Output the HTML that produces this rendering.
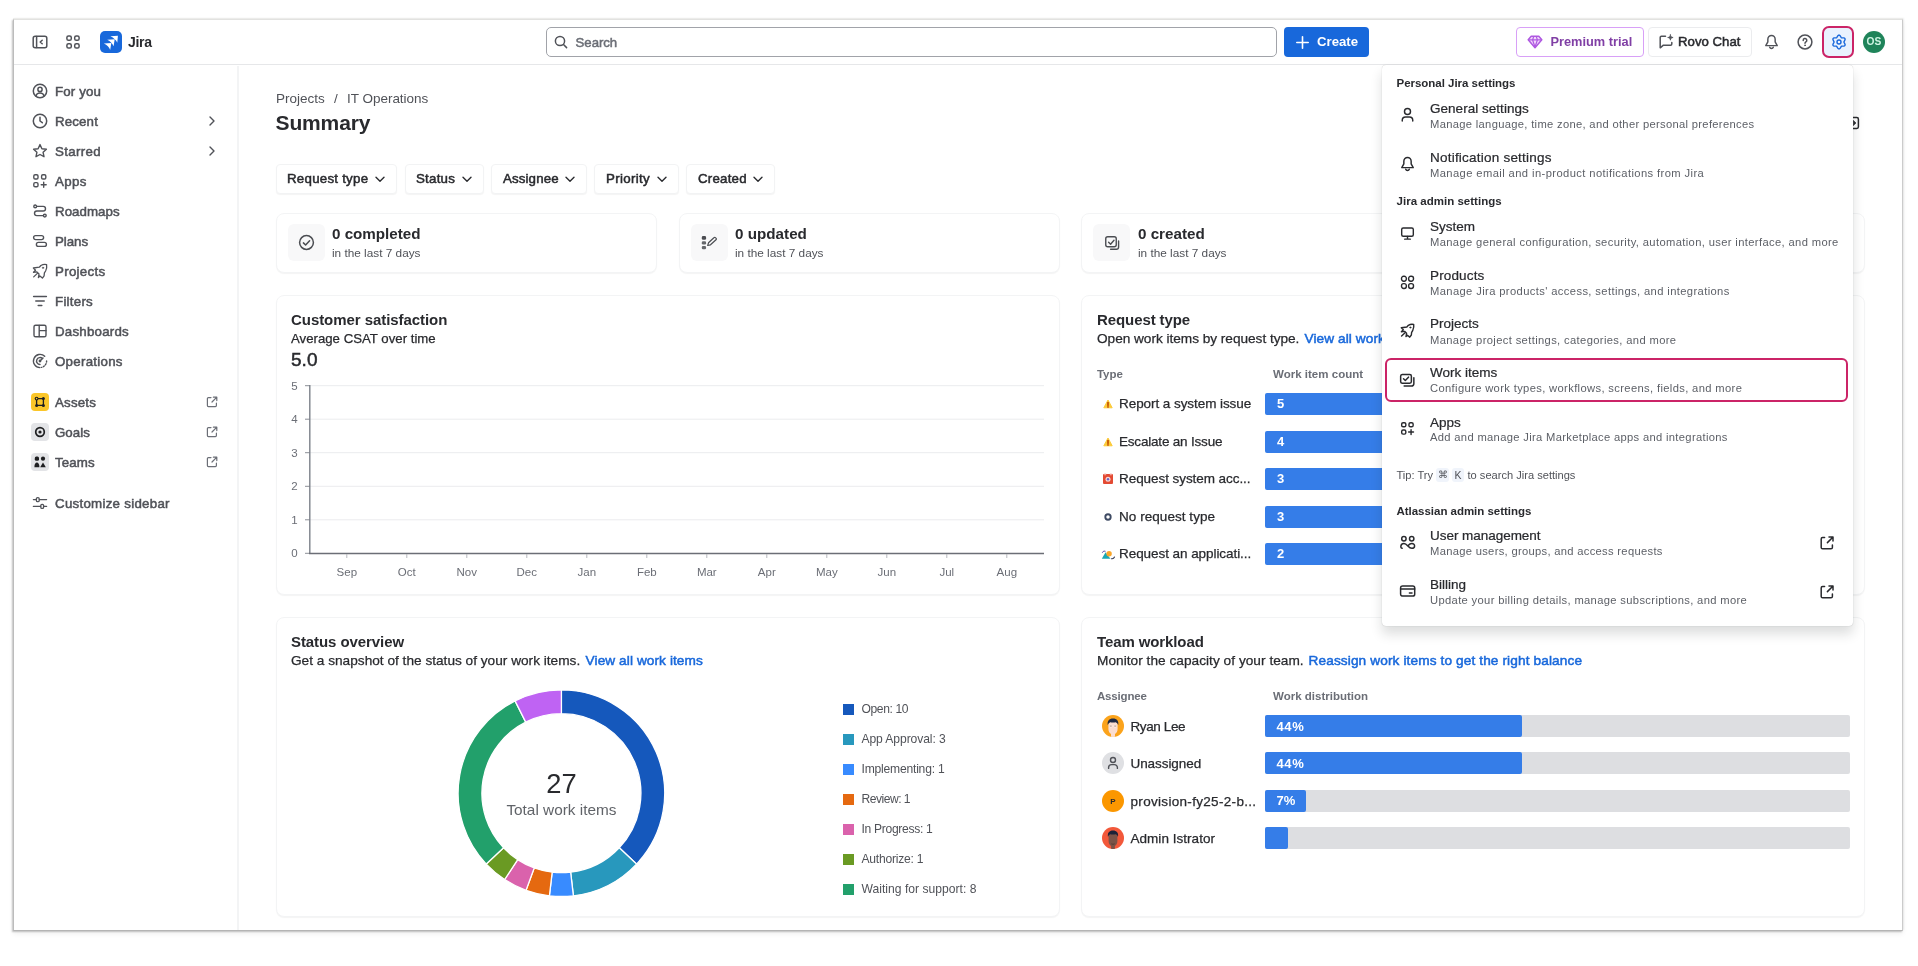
<!DOCTYPE html>
<html lang="en">
<head>
<meta charset="utf-8">
<title>Summary - IT Operations - Jira</title>
<style>
*{box-sizing:border-box;margin:0;padding:0}
html,body{width:1918px;height:966px;overflow:hidden;background:#fff}
body{font-family:"Liberation Sans",Arial,sans-serif;font-size:14px;color:#292A2E;position:relative}
.abs{position:absolute}
#frame{position:absolute;left:13px;top:19px;width:1890px;height:912px;background:#fff;border:1px solid #c9c9c9;border-left-color:#bcbcbc;border-bottom-color:#b4b4b4;border-right-color:#cbcbcb;border-top-color:#e2e2e0;box-shadow:0 -1px 0 #ececea,-1px 1px 1.500px rgba(0,0,0,.22),1px -1px 1.500px rgba(0,0,0,.07),0 3px 5px rgba(0,0,0,.06);overflow:hidden}
/* everything inside #app is positioned in page coordinates */
#app{position:absolute;left:-14px;top:-20px;width:1918px;height:966px;will-change:transform}
.t{position:absolute;white-space:nowrap;line-height:16px}
.m{-webkit-text-stroke:.5px currentColor}
.m2{-webkit-text-stroke:.25px currentColor}
.m3{-webkit-text-stroke:.22px currentColor}
.b{font-weight:700}
svg{position:absolute;overflow:visible}
.ic{fill:none;stroke:currentColor;stroke-width:1.5;stroke-linecap:round;stroke-linejoin:round}
.hline{position:absolute;height:1px;background:#E6E7E9}
.vline{position:absolute;width:1px;background:#EFF0F1}
/* sidebar */
.nav{color:#505258;font-size:13.300px}
.nav .t{left:55px}
/* cards */
.card{position:absolute;background:#fff;border:1px solid #F3F4F5;border-radius:8px;box-shadow:0 1px 1px rgba(30,31,33,.05)}
.fbtn{position:absolute;top:164px;height:30px;border:1px solid #F2F3F4;border-radius:4px;background:#fff;box-shadow:0 1px 1px rgba(30,31,33,.05)}
.sub{color:#505258}
.link{color:#1868DB}
.bar{position:absolute;height:22px;background:#357DE8;border-radius:2px}
.barbg{position:absolute;height:22px;background:#DDDEE1;border-radius:2px}
.barnum{position:absolute;color:#fff;font-weight:700;font-size:13px;line-height:22px}
</style>
</head>
<body>
<div id="frame"><div id="app">

<!-- ================= HEADER ================= -->
<div id="header">
  <div class="hline" style="left:14px;top:64px;width:1890px"></div>
  <!-- sidebar toggle -->
  <svg class="ic" style="left:32px;top:34px;color:#505258" width="16" height="16" viewBox="0 0 16 16"><rect x="1.2" y="2.2" width="13.6" height="11.6" rx="2"/><path d="M4.6 2.4v11.2M10.2 6.2L8.2 8l2 1.8"/></svg>
  <!-- app switcher -->
  <svg class="ic" style="left:65px;top:34px;color:#505258" width="16" height="16" viewBox="0 0 16 16"><rect x="1.9" y="1.9" width="4.4" height="4.4" rx="1.6"/><rect x="9.7" y="1.9" width="4.4" height="4.4" rx="1.6"/><rect x="1.9" y="9.7" width="4.4" height="4.4" rx="1.6"/><rect x="9.7" y="9.7" width="4.4" height="4.4" rx="1.6"/></svg>
  <!-- jira logo -->
  <div class="abs" style="left:100px;top:31px;width:22px;height:22px;border-radius:5px;background:#1868DB"></div>
  <svg style="left:100px;top:31px" width="22" height="22" viewBox="0 0 22 22"><g fill="#fff"><path d="M10.400 5.300L17.900 4.700 17.300 11.800Q15.600 7.800 10.400 5.300Z"/><path d="M7.200 8.700L14.700 8.200 13.600 15.300Q12.200 11.200 7.200 8.700Z"/><path d="M3.900 12.500L11.300 12 10.200 18.900Q8.700 14.800 3.900 12.500Z"/></g></svg>
  <span class="t b" style="left:128px;top:34px;font-size:14px;color:#292A2E;letter-spacing:-0.280px">Jira</span>
  <!-- search -->
  <div class="abs" style="left:546px;top:27px;width:731px;height:30px;border:1px solid #A1A3A9;border-radius:5px;background:#fff"></div>
  <svg class="ic" style="left:554px;top:35px;color:#505258" width="14" height="14" viewBox="0 0 14 14"><circle cx="6" cy="6" r="4.6"/><path d="M9.5 9.5L12.6 12.6"/></svg>
  <span class="t m" style="left:575.600px;top:34.500px;font-size:13.200px;color:#6B6E76;letter-spacing:-0.049px">Search</span>
  <!-- create -->
  <div class="abs" style="left:1284px;top:27px;width:85px;height:30px;border-radius:4px;background:#1868DB"></div>
  <svg class="ic" style="left:1296px;top:36px;color:#fff;stroke-width:1.6" width="13" height="13" viewBox="0 0 13 13"><path d="M6.5 .8v11.4M.8 6.500h11.400"/></svg>
  <span class="t b" style="left:1317px;top:34px;font-size:13.200px;color:#fff;letter-spacing:-0.010px">Create</span>
  <!-- premium trial -->
  <div class="abs" style="left:1516px;top:27px;width:128px;height:30px;border:1px solid #D8A0F7;border-radius:4px;background:#fff"></div>
  <svg style="left:1527px;top:35px" width="16" height="14" viewBox="0 0 16 14"><path d="M4.2 1.2h7.600l3 3.600L8 12.800 1.200 4.800z" fill="#F3D9FC" stroke="#AF59E1" stroke-width="1.500" stroke-linejoin="round"/><path d="M1.500 4.900h13M5.600 5L8 12 10.400 5M5.600 4.800l1.200-3.400M10.400 4.800L9.200 1.400" fill="none" stroke="#AF59E1" stroke-width="1.200" stroke-linejoin="round"/></svg>
  <span class="t b" style="left:1550.500px;top:34px;font-size:12.800px;color:#803FA5;letter-spacing:-0.007px">Premium trial</span>
  <!-- rovo chat -->
  <div class="abs" style="left:1648px;top:27px;width:104px;height:30px;border:1px solid #EBECEE;border-radius:4px;background:#fff"></div>
  <svg class="ic" style="left:1658px;top:34px;color:#505258" width="17" height="17" viewBox="0 0 17 17"><path d="M7.500 2.200H3.400a1.200 1.200 0 0 0-1.200 1.200v10.400l3.200-2.600h7.200a1.200 1.200 0 0 0 1.200-1.200V8.500"/><path d="M12.400 .8c.2 1.800.9 2.500 2.700 2.700-1.800.2-2.500.9-2.700 2.700-.2-1.800-.9-2.500-2.700-2.700 1.800-.2 2.500-.9 2.700-2.700z" fill="currentColor" stroke-width=".8"/></svg>
  <span class="t m" style="left:1678px;top:34px;font-size:13.200px;color:#292A2E;letter-spacing:0.021px">Rovo Chat</span>
  <!-- bell -->
  <svg class="ic" style="left:1763.600px;top:34.300px;color:#505258;stroke-width:1.550" width="15" height="15" viewBox="0 0 16 16"><path d="M8 1.600a3.900 3.900 0 0 0-3.900 3.900v3l-2.200 3.900h12.200l-2.200-3.900v-3A3.900 3.900 0 0 0 8 1.600z"/><path d="M6.100 14.100a2 2 0 0 0 3.800 0"/></svg>
  <!-- help -->
  <svg class="ic" style="left:1796.500px;top:34.300px;color:#505258" width="16" height="16" viewBox="0 0 16 16"><circle cx="8" cy="8" r="6.900"/><path d="M6.200 6.400a1.800 1.800 0 1 1 2.700 1.500c-.6.400-.9.700-.9 1.400"/><circle cx="8" cy="11.300" r=".5" fill="currentColor" stroke-width=".8"/></svg>
  <!-- settings (selected + highlighted) -->
  <div class="abs" style="left:1822px;top:26px;width:32px;height:32px;border:2px solid #CB2467;border-radius:7px;background:#E9F2FE"></div>
  <svg style="left:1830.600px;top:34.200px" width="16" height="16" viewBox="0 0 16 16"><g fill="none" stroke="#1868DB" stroke-width="1.4" stroke-linejoin="round"><path d="M8.00 1.15 L8.59 1.30 L9.11 1.72 L9.53 2.30 L9.86 2.90 L10.15 3.40 L10.47 3.71 L10.91 3.84 L11.49 3.84 L12.17 3.83 L12.88 3.90 L13.51 4.14 L13.93 4.57 L14.09 5.16 L13.99 5.82 L13.70 6.47 L13.34 7.06 L13.06 7.56 L12.95 8.00 L13.06 8.44 L13.34 8.94 L13.70 9.53 L13.99 10.18 L14.09 10.84 L13.93 11.42 L13.51 11.86 L12.88 12.10 L12.17 12.17 L11.49 12.16 L10.91 12.16 L10.48 12.29 L10.15 12.60 L9.86 13.10 L9.53 13.70 L9.11 14.28 L8.59 14.70 L8.00 14.85 L7.41 14.70 L6.89 14.28 L6.47 13.70 L6.14 13.10 L5.85 12.60 L5.52 12.29 L5.09 12.16 L4.51 12.16 L3.83 12.17 L3.12 12.10 L2.49 11.86 L2.07 11.43 L1.91 10.84 L2.01 10.18 L2.30 9.53 L2.66 8.94 L2.94 8.44 L3.05 8.00 L2.94 7.56 L2.66 7.06 L2.30 6.47 L2.01 5.82 L1.91 5.16 L2.07 4.58 L2.49 4.14 L3.12 3.90 L3.83 3.83 L4.51 3.84 L5.09 3.84 L5.53 3.71 L5.85 3.40 L6.14 2.90 L6.47 2.30 L6.89 1.72 L7.41 1.30Z"/><circle cx="8" cy="8" r="2"/></g></svg>
  <!-- avatar -->
  <div class="abs" style="left:1863px;top:31px;width:22px;height:22px;border-radius:50%;background:#1F845A"></div>
  <span class="t b" style="left:1866.500px;top:35px;font-size:10.200px;line-height:14px;color:#CFF5E4">OS</span>
</div>

<!-- ================= SIDEBAR ================= -->
<div id="sidebar" class="nav">
  <div class="vline" style="left:237px;top:66px;width:2px;height:866px;background:#F3F4F5"></div>

  <!-- For you -->
  <svg class="ic" style="left:32px;top:83px" width="16" height="16" viewBox="0 0 16 16"><circle cx="8" cy="8" r="6.7"/><circle cx="8" cy="6.4" r="2.1"/><path d="M3.900 13.100c.5-2 2.100-3 4.100-3s3.600 1 4.100 3"/></svg>
  <span class="t m" style="top:83.5px;letter-spacing:0.129px">For you</span>

  <!-- Recent -->
  <svg class="ic" style="left:32px;top:113px" width="16" height="16" viewBox="0 0 16 16"><circle cx="8" cy="8" r="6.700"/><path d="M8 4.200V8l2.300 1.700"/></svg>
  <span class="t m" style="top:113.5px;letter-spacing:0.143px">Recent</span>
  <svg class="ic" style="left:208px;top:116px;stroke-width:1.400" width="8" height="10" viewBox="0 0 8 10"><path d="M2 1l4 4-4 4"/></svg>

  <!-- Starred -->
  <svg class="ic" style="left:32px;top:143px;stroke-width:1.400" width="16" height="16" viewBox="0 0 16 16"><path d="M8 1.600l1.900 4.100 4.500.5-3.300 3.100.9 4.400L8 11.500l-4 2.200.9-4.400L1.600 6.200l4.500-.5z"/></svg>
  <span class="t m" style="top:143.5px;letter-spacing:0.342px">Starred</span>
  <svg class="ic" style="left:208px;top:146px;stroke-width:1.400" width="8" height="10" viewBox="0 0 8 10"><path d="M2 1l4 4-4 4"/></svg>

  <!-- Apps -->
  <svg class="ic" style="left:32px;top:173px;stroke-width:1.400" width="16" height="16" viewBox="0 0 16 16"><rect x="1.800" y="1.800" width="4.200" height="4.200" rx="1.300"/><rect x="9.600" y="1.800" width="4.200" height="4.200" rx="1.300"/><rect x="1.800" y="9.600" width="4.200" height="4.200" rx="1.300"/><path d="M11.700 9.200v5M9.200 11.700h5"/></svg>
  <span class="t m" style="top:173.5px;letter-spacing:0.322px">Apps</span>

  <!-- Roadmaps -->
  <svg class="ic" style="left:32px;top:203px;stroke-width:1.400" width="16" height="16" viewBox="0 0 16 16"><circle cx="3.200" cy="3.400" r="1.400"/><circle cx="12.800" cy="12.600" r="1.400"/><path d="M4.800 3.400h6.400a2.300 2.300 0 0 1 0 4.600H4.800a2.300 2.300 0 0 0 0 4.600h6.400"/></svg>
  <span class="t m" style="top:203.5px;letter-spacing:0.036px">Roadmaps</span>

  <!-- Plans -->
  <svg class="ic" style="left:32px;top:233px;stroke-width:1.400" width="16" height="16" viewBox="0 0 16 16"><rect x="1.600" y="2.600" width="10" height="4" rx="2"/><rect x="4.400" y="9.400" width="10" height="4" rx="2"/></svg>
  <span class="t m" style="top:233.5px;letter-spacing:-0.053px">Plans</span>

  <!-- Projects (rocket) -->
  <svg class="ic" style="left:32px;top:263px;stroke-width:1.300" width="16" height="16" viewBox="0 0 16 16"><path d="M7.300 4.200L1.400 5l2.100 2.300-2 2 3.400-.4 2.100 2.100-.600 3.500 1.500-1.500 2.500 2.100 1.700-2.300.3-2.900 1.200-1.900Q15.200 4.600 14.600 1.600 11.600.900 8.900 2.500z"/><path d="M1.700 13.900L5.400 10.400"/><circle cx="11" cy="4.800" r=".7" fill="currentColor" stroke-width=".6"/></svg>
  <span class="t m" style="top:263.5px;letter-spacing:0.294px">Projects</span>

  <!-- Filters -->
  <svg class="ic" style="left:32px;top:293px;stroke-width:1.500" width="16" height="16" viewBox="0 0 16 16"><path d="M1.600 3.400h12.800M3.800 8h8.400M6.200 12.600h3.600"/></svg>
  <span class="t m" style="top:293.5px;letter-spacing:0.257px">Filters</span>

  <!-- Dashboards -->
  <svg class="ic" style="left:32px;top:323px;stroke-width:1.400" width="16" height="16" viewBox="0 0 16 16"><rect x="2" y="2.200" width="12" height="11.600" rx="1.600"/><path d="M7.200 2.400v11.200M7.400 7.600H14"/></svg>
  <span class="t m" style="top:323.5px;letter-spacing:0.230px">Dashboards</span>

  <!-- Operations (radar) -->
  <svg class="ic" style="left:32px;top:353px;stroke-width:1.400" width="16" height="16" viewBox="0 0 16 16"><path d="M12.700 3.300A6.600 6.600 0 1 0 8 14.600"/><path d="M10.500 5.500A3.500 3.500 0 1 0 8 11.500"/><circle cx="8" cy="8" r=".7" fill="currentColor"/><path d="M14.600 8a6.600 6.600 0 0 1-5 6.400" stroke-dasharray="1.200 1.600"/><path d="M8 8l3-3"/></svg>
  <span class="t m" style="top:353.5px;letter-spacing:0.275px">Operations</span>

  <!-- Assets -->
  <div class="abs" style="left:31px;top:393px;width:18px;height:18px;border-radius:4px;background:#FBC629"></div>
  <svg style="left:32px;top:394px" width="16" height="16" viewBox="0 0 16 16"><g fill="none" stroke="#1E1F21" stroke-width="1.300"><path d="M4.600 4.600h6.800v6.800H4.600z"/></g><g fill="#1E1F21"><circle cx="4.600" cy="4.600" r="1.900"/><circle cx="11.400" cy="4.600" r="1.500"/><circle cx="4.600" cy="11.400" r="1.500"/><circle cx="11.400" cy="11.400" r="1.500"/></g><circle cx="4.600" cy="4.600" r=".8" fill="#FBC629"/></svg>
  <span class="t m" style="top:394.5px;letter-spacing:0.182px">Assets</span>
  <svg class="ic" style="left:206px;top:396px;stroke-width:1.200;color:#6B6E76" width="12" height="12" viewBox="0 0 12 12"><path d="M5 1.600H2.400a1 1 0 0 0-1 1v7a1 1 0 0 0 1 1h7a1 1 0 0 0 1-1V7.200M7.400 1.200h3.400v3.400M10.600 1.400L6 6"/></svg>

  <!-- Goals -->
  <div class="abs" style="left:31px;top:423px;width:18px;height:18px;border-radius:4px;background:#E3E4E7"></div>
  <svg style="left:32px;top:424px" width="16" height="16" viewBox="0 0 16 16"><circle cx="8" cy="8" r="4.300" fill="none" stroke="#1E1F21" stroke-width="1.700"/><circle cx="8" cy="8" r="1.600" fill="#1E1F21"/></svg>
  <span class="t m" style="top:424.5px;letter-spacing:0.010px">Goals</span>
  <svg class="ic" style="left:206px;top:426px;stroke-width:1.200;color:#6B6E76" width="12" height="12" viewBox="0 0 12 12"><path d="M5 1.600H2.400a1 1 0 0 0-1 1v7a1 1 0 0 0 1 1h7a1 1 0 0 0 1-1V7.200M7.400 1.200h3.400v3.400M10.600 1.400L6 6"/></svg>

  <!-- Teams -->
  <div class="abs" style="left:31px;top:453px;width:18px;height:18px;border-radius:4px;background:#E3E4E7"></div>
  <svg style="left:32px;top:454px" width="16" height="16" viewBox="0 0 16 16"><g fill="#1E1F21"><rect x="2.800" y="2.600" width="4.200" height="4.200" rx="1.500"/><circle cx="11" cy="4.700" r="2.100"/><path d="M2.400 13.200c0-3 1.100-4.600 2.500-4.600s2.500 1.600 2.500 4.600z"/><path d="M8.200 13.200l2.800-4.800 2.800 4.800z"/></g></svg>
  <span class="t m" style="top:454.5px;letter-spacing:0.126px">Teams</span>
  <svg class="ic" style="left:206px;top:456px;stroke-width:1.200;color:#6B6E76" width="12" height="12" viewBox="0 0 12 12"><path d="M5 1.600H2.400a1 1 0 0 0-1 1v7a1 1 0 0 0 1 1h7a1 1 0 0 0 1-1V7.200M7.400 1.200h3.400v3.400M10.600 1.400L6 6"/></svg>

  <!-- Customize sidebar -->
  <svg class="ic" style="left:32px;top:495px;stroke-width:1.300" width="16" height="16" viewBox="0 0 16 16"><path d="M1.400 4.600h2.800M7.400 4.600h7.200M1.400 11.400h7.200M11.800 11.400h2.800"/><rect x="4.400" y="2.600" width="2.800" height="4" rx="1.200"/><rect x="8.800" y="9.400" width="2.800" height="4" rx="1.200"/></svg>
  <span class="t m" style="top:495.5px;letter-spacing:0.275px">Customize sidebar</span>
</div>

<!-- ================= MAIN ================= -->
<div id="main">
  <!-- breadcrumbs + title -->
  <span class="t" style="left:276px;top:91px;font-size:13.500px;color:#505258;letter-spacing:0.002px">Projects</span>
  <span class="t" style="left:334px;top:91px;font-size:13.500px;color:#505258">/</span>
  <span class="t" style="left:347px;top:91px;font-size:13.500px;color:#505258;letter-spacing:-0.019px">IT Operations</span>
  <span class="t b" style="left:275.500px;top:109px;font-size:21px;line-height:28px;color:#292A2E;letter-spacing:-0.131px">Summary</span>
  <!-- icon peeking right of the dropdown -->
  <svg class="ic" style="left:1846px;top:116px;color:#292A2E;stroke-width:1.500" width="14" height="14" viewBox="0 0 14 14"><rect x="1" y="1.600" width="11.400" height="10.800" rx="1.600"/><path d="M7.400 4.800L9.800 7 7.400 9.200z" fill="currentColor" stroke-width="1"/></svg>

  <!-- filter buttons -->
  <div class="fbtn" style="left:276px;width:121px"></div>
  <span class="t m" style="left:287px;top:171.300px;font-size:13.300px;color:#292A2E;letter-spacing:0.245px">Request type</span>
  <svg class="ic" style="left:375px;top:176px;stroke-width:1.400;color:#292A2E" width="10" height="7" viewBox="0 0 10 7"><path d="M1 1.200l4 4 4-4"/></svg>
  <div class="fbtn" style="left:405px;width:79px"></div>
  <span class="t m" style="left:416px;top:171.300px;font-size:13.300px;color:#292A2E;letter-spacing:0.233px">Status</span>
  <svg class="ic" style="left:462px;top:176px;stroke-width:1.400;color:#292A2E" width="10" height="7" viewBox="0 0 10 7"><path d="M1 1.200l4 4 4-4"/></svg>
  <div class="fbtn" style="left:491px;width:96px"></div>
  <span class="t m" style="left:503px;top:171.300px;font-size:13.300px;color:#292A2E;letter-spacing:0.125px">Assignee</span>
  <svg class="ic" style="left:565px;top:176px;stroke-width:1.400;color:#292A2E" width="10" height="7" viewBox="0 0 10 7"><path d="M1 1.200l4 4 4-4"/></svg>
  <div class="fbtn" style="left:594px;width:85px"></div>
  <span class="t m" style="left:606px;top:171.300px;font-size:13.300px;color:#292A2E;letter-spacing:0.341px">Priority</span>
  <svg class="ic" style="left:657px;top:176px;stroke-width:1.400;color:#292A2E" width="10" height="7" viewBox="0 0 10 7"><path d="M1 1.200l4 4 4-4"/></svg>
  <div class="fbtn" style="left:686px;width:89px"></div>
  <span class="t m" style="left:698px;top:171.300px;font-size:13.300px;color:#292A2E;letter-spacing:0.212px">Created</span>
  <svg class="ic" style="left:753px;top:176px;stroke-width:1.400;color:#292A2E" width="10" height="7" viewBox="0 0 10 7"><path d="M1 1.200l4 4 4-4"/></svg>

  <!-- stat cards -->
  <div class="card" style="left:276px;top:213px;width:381px;height:60px"></div>
  <div class="abs" style="left:288px;top:224px;width:37px;height:37px;border-radius:6px;background:#F8F8F9"></div>
  <svg class="ic" style="left:297.500px;top:234.200px;color:#4B4D52;stroke-width:1.500" width="17" height="17" viewBox="0 0 17 17"><circle cx="8.500" cy="8.500" r="6.900"/><path d="M5.400 8.900l2.200 2.100 4-4.300"/></svg>
  <span class="t b" style="left:332px;top:225px;font-size:15.200px;line-height:18px;color:#292A2E;letter-spacing:-0.011px">0 completed</span>
  <span class="t" style="left:332px;top:246px;font-size:11.800px;line-height:14px;color:#505258;letter-spacing:-0.002px">in the last 7 days</span>

  <div class="card" style="left:679px;top:213px;width:381px;height:60px"></div>
  <div class="abs" style="left:691px;top:224px;width:37px;height:37px;border-radius:6px;background:#F8F8F9"></div>
  <svg style="left:700px;top:234px" width="18" height="18" viewBox="0 0 18 18"><g fill="#4B4D52"><rect x="1.800" y="2.100" width="4.300" height="3.600" rx="1.300"/><rect x="1.800" y="7.300" width="4.300" height="3.200" rx="1.300" opacity=".85"/><rect x="1.800" y="12" width="4.300" height="3.200" rx="1.300" opacity=".85"/></g><path d="M7.700 11.500l.8-2.700 5.400-5.100a1.100 1.100 0 0 1 1.600 0l.5.500a1.100 1.100 0 0 1 0 1.600l-5.500 5z" fill="none" stroke="#4B4D52" stroke-width="1.200" stroke-linejoin="round"/></svg>
  <span class="t b" style="left:735px;top:225px;font-size:15.200px;line-height:18px;color:#292A2E;letter-spacing:0.018px">0 updated</span>
  <span class="t" style="left:735px;top:246px;font-size:11.800px;line-height:14px;color:#505258;letter-spacing:-0.002px">in the last 7 days</span>

  <div class="card" style="left:1081px;top:213px;width:381px;height:60px"></div>
  <div class="abs" style="left:1093px;top:224px;width:37px;height:37px;border-radius:6px;background:#F8F8F9"></div>
  <svg class="ic" style="left:1103px;top:234px;color:#4B4D52;stroke-width:1.400" width="18" height="18" viewBox="0 0 18 18"><rect x="2.750" y="2.800" width="10.500" height="10" rx="2"/><path d="M5.600 8.200l2 2 3.400-4M15.600 7v6a2.200 2.200 0 0 1-2.200 2.200H7.600"/></svg>
  <span class="t b" style="left:1138px;top:225px;font-size:15.200px;line-height:18px;color:#292A2E;letter-spacing:-0.000px">0 created</span>
  <span class="t" style="left:1138px;top:246px;font-size:11.800px;line-height:14px;color:#505258;letter-spacing:-0.002px">in the last 7 days</span>

  <div class="card" style="left:1484px;top:213px;width:381px;height:60px"></div>

  <!-- Customer satisfaction -->
  <div class="card" style="left:276px;top:295px;width:784px;height:300px"></div>
  <span class="t b" style="left:291px;top:311px;font-size:15px;line-height:18px;color:#292A2E;letter-spacing:-0.059px">Customer satisfaction</span>
  <span class="t m2" style="left:291px;top:331px;font-size:13.200px;color:#292A2E;letter-spacing:0.013px">Average CSAT over time</span>
  <span class="t m" style="left:291px;top:349px;font-size:19px;line-height:22px;color:#292A2E;letter-spacing:0.026px">5.0</span>
  <svg style="left:0;top:0" width="1918" height="966" viewBox="0 0 1918 966" font-family="Liberation Sans, Arial, sans-serif" font-size="11.500" fill="#6B6E76"><path d="M310 385.7H1044" stroke="#EBECEE" stroke-width="1"/><path d="M305 385.7H310" stroke="#8C8F97" stroke-width="1"/><text x="294.500" y="389.7" text-anchor="middle">5</text><path d="M310 419.2H1044" stroke="#EBECEE" stroke-width="1"/><path d="M305 419.2H310" stroke="#8C8F97" stroke-width="1"/><text x="294.500" y="423.2" text-anchor="middle">4</text><path d="M310 452.7H1044" stroke="#EBECEE" stroke-width="1"/><path d="M305 452.7H310" stroke="#8C8F97" stroke-width="1"/><text x="294.500" y="456.7" text-anchor="middle">3</text><path d="M310 486.3H1044" stroke="#EBECEE" stroke-width="1"/><path d="M305 486.3H310" stroke="#8C8F97" stroke-width="1"/><text x="294.500" y="490.3" text-anchor="middle">2</text><path d="M310 519.8H1044" stroke="#EBECEE" stroke-width="1"/><path d="M305 519.8H310" stroke="#8C8F97" stroke-width="1"/><text x="294.500" y="523.8" text-anchor="middle">1</text><path d="M305 553.3H310" stroke="#8C8F97" stroke-width="1"/><text x="294.500" y="557.3" text-anchor="middle">0</text><path d="M309.800 385V554" stroke="#7D818A" stroke-width="1.400"/><path d="M309 553.500H1044" stroke="#6B6E76" stroke-width="1.600"/><path d="M346.8 554V558" stroke="#B7B9BE" stroke-width="1"/><text x="346.8" y="575.500" text-anchor="middle">Sep</text><path d="M406.8 554V558" stroke="#B7B9BE" stroke-width="1"/><text x="406.8" y="575.500" text-anchor="middle">Oct</text><path d="M466.8 554V558" stroke="#B7B9BE" stroke-width="1"/><text x="466.8" y="575.500" text-anchor="middle">Nov</text><path d="M526.8 554V558" stroke="#B7B9BE" stroke-width="1"/><text x="526.8" y="575.500" text-anchor="middle">Dec</text><path d="M586.8 554V558" stroke="#B7B9BE" stroke-width="1"/><text x="586.8" y="575.500" text-anchor="middle">Jan</text><path d="M646.8 554V558" stroke="#B7B9BE" stroke-width="1"/><text x="646.8" y="575.500" text-anchor="middle">Feb</text><path d="M706.8 554V558" stroke="#B7B9BE" stroke-width="1"/><text x="706.8" y="575.500" text-anchor="middle">Mar</text><path d="M766.8 554V558" stroke="#B7B9BE" stroke-width="1"/><text x="766.8" y="575.500" text-anchor="middle">Apr</text><path d="M826.8 554V558" stroke="#B7B9BE" stroke-width="1"/><text x="826.8" y="575.500" text-anchor="middle">May</text><path d="M886.8 554V558" stroke="#B7B9BE" stroke-width="1"/><text x="886.8" y="575.500" text-anchor="middle">Jun</text><path d="M946.8 554V558" stroke="#B7B9BE" stroke-width="1"/><text x="946.8" y="575.500" text-anchor="middle">Jul</text><path d="M1006.8 554V558" stroke="#B7B9BE" stroke-width="1"/><text x="1006.8" y="575.500" text-anchor="middle">Aug</text></svg>
  <!-- Request type -->
  <div class="card" style="left:1081px;top:295px;width:784px;height:300px"></div>
  <span class="t b" style="left:1097px;top:311px;font-size:15px;line-height:18px;color:#292A2E;letter-spacing:-0.092px">Request type</span>
  <span class="t m2" style="left:1097px;top:331px;font-size:13.650px;color:#292A2E;letter-spacing:-0.025px">Open work items by request type.</span>
  <span class="t link m" style="left:1304.500px;top:331px;font-size:13.650px;letter-spacing:0.082px">View all work items</span>
  <span class="t b" style="left:1097px;top:366px;font-size:11.500px;color:#6B6E76;letter-spacing:-0.050px">Type</span>
  <span class="t b" style="left:1273px;top:366px;font-size:11.500px;color:#6B6E76;letter-spacing:0.014px">Work item count</span>
  <svg style="left:1102.700px;top:398.5px" width="10" height="10" viewBox="0 0 10 10"><path d="M5 1L9.200 8.800H.800z" fill="#FCCB3A" stroke="#FCCB3A" stroke-width="1" stroke-linejoin="round"/><path d="M5 3.600v2.600" stroke="#C25100" stroke-width="1.700" stroke-linecap="round"/><circle cx="5" cy="7.900" r=".9" fill="#C25100"/></svg>
  <span class="t m2" style="left:1119px;top:396.4px;font-size:13.500px;color:#292A2E;letter-spacing:-0.065px">Report a system issue</span>
  <div class="bar" style="left:1265px;top:393.0px;width:585px"></div>
  <span class="barnum" style="left:1277px;top:393.0px">5</span>
  <svg style="left:1102.700px;top:436.5px" width="10" height="10" viewBox="0 0 10 10"><path d="M5 1L9.200 8.800H.800z" fill="#FCCB3A" stroke="#FCCB3A" stroke-width="1" stroke-linejoin="round"/><path d="M5 3.600v2.600" stroke="#C25100" stroke-width="1.700" stroke-linecap="round"/><circle cx="5" cy="7.900" r=".9" fill="#C25100"/></svg>
  <span class="t m2" style="left:1119px;top:433.9px;font-size:13.500px;color:#292A2E;letter-spacing:-0.193px">Escalate an Issue</span>
  <div class="bar" style="left:1265px;top:430.5px;width:468px"></div>
  <span class="barnum" style="left:1277px;top:430.5px">4</span>
  <svg style="left:1102.200px;top:473.3px" width="12" height="12" viewBox="0 0 12 12"><rect x="1" y="1" width="10" height="10" rx="1" fill="#E34A33"/><circle cx="6" cy="6.300" r="2.500" fill="#F9D9D3"/><circle cx="6" cy="6.300" r="1.200" fill="#6B63C9"/><rect x="2.200" y=".6" width="2" height="1.700" fill="#F4A59B"/><rect x="7.800" y=".6" width="2" height="1.700" fill="#F4A59B"/></svg>
  <span class="t m2" style="left:1119px;top:471.4px;font-size:13.500px;color:#292A2E;letter-spacing:-0.062px">Request system acc...</span>
  <div class="bar" style="left:1265px;top:468.0px;width:351px"></div>
  <span class="barnum" style="left:1277px;top:468.0px">3</span>
  <svg style="left:1102px;top:510.5px" width="12" height="12" viewBox="0 0 12 12"><circle cx="6" cy="6" r="2.700" fill="none" stroke="#3E4A63" stroke-width="1.900"/></svg>
  <span class="t m2" style="left:1119px;top:508.9px;font-size:13.500px;color:#292A2E;letter-spacing:0.052px">No request type</span>
  <div class="bar" style="left:1265px;top:505.5px;width:351px"></div>
  <span class="barnum" style="left:1277px;top:505.5px">3</span>
  <svg style="left:1101px;top:548.500px" width="14" height="11" viewBox="0 0 14 11"><path d="M.800 9.800L4.600 3.200 9.400 9.800z" fill="#1AA7B4"/><circle cx="8.100" cy="4.700" r="2.700" fill="#F9A62B"/><path d="M10.400 9.700q2.200.5 3.100-1.700" stroke="#3B3F58" stroke-width="1.100" fill="none" stroke-linecap="round"/><path d="M1.400 3.400q1.200-2.400 2.800-1.300" stroke="#5B4FA8" stroke-width="1" fill="none" stroke-linecap="round"/></svg>
  <span class="t m2" style="left:1119px;top:546.4px;font-size:13.500px;color:#292A2E;letter-spacing:-0.061px">Request an applicati...</span>
  <div class="bar" style="left:1265px;top:543.0px;width:234px"></div>
  <span class="barnum" style="left:1277px;top:543.0px">2</span>
  <!-- Status overview -->
  <div class="card" style="left:276px;top:617px;width:784px;height:300px"></div>
  <span class="t b" style="left:291px;top:633px;font-size:15px;line-height:18px;color:#292A2E;letter-spacing:-0.081px">Status overview</span>
  <span class="t m2" style="left:291px;top:653px;font-size:13.650px;color:#292A2E;letter-spacing:0.007px">Get a snapshot of the status of your work items.</span>
  <span class="t link m" style="left:585.600px;top:653px;font-size:13.650px;letter-spacing:0.082px">View all work items</span>
  <svg style="left:0;top:0" width="1918" height="966" viewBox="0 0 1918 966"><path d="M561.40 689.90A103.3 103.3 0 0 1 636.54 864.09L619.23 847.76A79.5 79.5 0 0 0 561.40 713.70Z" fill="#1558BC" stroke="#fff" stroke-width="1.300"/><path d="M636.54 864.09A103.3 103.3 0 0 1 573.39 895.80L570.63 872.16A79.5 79.5 0 0 0 619.23 847.76Z" fill="#2898BD" stroke="#fff" stroke-width="1.300"/><path d="M573.39 895.80A103.3 103.3 0 0 1 549.41 895.80L552.17 872.16A79.5 79.5 0 0 0 570.63 872.16Z" fill="#388BFF" stroke="#fff" stroke-width="1.300"/><path d="M549.41 895.80A103.3 103.3 0 0 1 526.07 890.27L534.21 867.91A79.5 79.5 0 0 0 552.17 872.16Z" fill="#E56910" stroke="#fff" stroke-width="1.300"/><path d="M526.07 890.27A103.3 103.3 0 0 1 504.64 879.51L517.71 859.62A79.5 79.5 0 0 0 534.21 867.91Z" fill="#DA62AC" stroke="#fff" stroke-width="1.300"/><path d="M504.64 879.51A103.3 103.3 0 0 1 486.26 864.09L503.57 847.76A79.5 79.5 0 0 0 517.71 859.62Z" fill="#6A9A23" stroke="#fff" stroke-width="1.300"/><path d="M486.26 864.09A103.3 103.3 0 0 1 515.04 700.89L525.72 722.16A79.5 79.5 0 0 0 503.57 847.76Z" fill="#22A06B" stroke="#fff" stroke-width="1.300"/><path d="M515.04 700.89A103.3 103.3 0 0 1 561.40 689.90L561.40 713.70A79.5 79.5 0 0 0 525.72 722.16Z" fill="#BF63F3" stroke="#fff" stroke-width="1.300"/><text x="561.4" y="793" text-anchor="middle" font-family="Liberation Sans, Arial, sans-serif" font-size="27.300" fill="#292A2E">27</text><text x="561.4" y="815" text-anchor="middle" font-family="Liberation Sans, Arial, sans-serif" font-size="15.350" fill="#606368">Total work items</text></svg>
  <div class="abs" style="left:843px;top:703.9px;width:11px;height:11px;background:#1558BC"></div>
  <span class="t" style="left:861.500px;top:700.9px;font-size:12.100px;color:#505258;letter-spacing:-0.383px">Open: 10</span>
  <div class="abs" style="left:843px;top:733.9px;width:11px;height:11px;background:#2898BD"></div>
  <span class="t" style="left:861.500px;top:730.9px;font-size:12.100px;color:#505258;letter-spacing:-0.086px">App Approval: 3</span>
  <div class="abs" style="left:843px;top:763.8px;width:11px;height:11px;background:#388BFF"></div>
  <span class="t" style="left:861.500px;top:760.8px;font-size:12.100px;color:#505258;letter-spacing:-0.203px">Implementing: 1</span>
  <div class="abs" style="left:843px;top:793.7px;width:11px;height:11px;background:#E56910"></div>
  <span class="t" style="left:861.500px;top:790.8px;font-size:12.100px;color:#505258;letter-spacing:-0.501px">Review: 1</span>
  <div class="abs" style="left:843px;top:823.7px;width:11px;height:11px;background:#DA62AC"></div>
  <span class="t" style="left:861.500px;top:820.7px;font-size:12.100px;color:#505258;letter-spacing:-0.307px">In Progress: 1</span>
  <div class="abs" style="left:843px;top:853.6px;width:11px;height:11px;background:#6A9A23"></div>
  <span class="t" style="left:861.500px;top:850.6px;font-size:12.100px;color:#505258;letter-spacing:-0.229px">Authorize: 1</span>
  <div class="abs" style="left:843px;top:883.6px;width:11px;height:11px;background:#22A06B"></div>
  <span class="t" style="left:861.500px;top:880.6px;font-size:12.100px;color:#505258;letter-spacing:0.018px">Waiting for support: 8</span>
  <!-- Team workload -->
  <div class="card" style="left:1081px;top:617px;width:784px;height:300px"></div>
  <span class="t b" style="left:1097px;top:633px;font-size:15px;line-height:18px;color:#292A2E;letter-spacing:-0.107px">Team workload</span>
  <span class="t m2" style="left:1097px;top:653px;font-size:13.650px;color:#292A2E;letter-spacing:0.036px">Monitor the capacity of your team.</span>
  <span class="t link m" style="left:1308.500px;top:653px;font-size:13.650px;letter-spacing:0.118px">Reassign work items to get the right balance</span>
  <span class="t b" style="left:1097px;top:688px;font-size:11.500px;color:#6B6E76;letter-spacing:-0.180px">Assignee</span>
  <span class="t b" style="left:1273px;top:688px;font-size:11.500px;color:#6B6E76;letter-spacing:0.007px">Work distribution</span>
  <svg style="left:1102px;top:715px" width="22" height="22" viewBox="0 0 22 22"><defs><clipPath id="cR"><circle cx="11" cy="11" r="11"/></clipPath></defs><circle cx="11" cy="11" r="11" fill="#FBA31B"/><g clip-path="url(#cR)"><path d="M6.400 9.500c0-2 1.800-3.300 4.600-3.300s4.600 1.300 4.600 3.300v4.500c0 2.600-1.400 4.200-2.600 5v3.500H9v-3.500c-1.200-.8-2.600-2.400-2.600-5z" fill="#FBDDD0"/><path d="M5.800 10.200c-.8-4.200 1.400-6.600 5.200-6.600s6 2.400 5.200 6.600c-.6-1.800-1.400-2.600-2.400-3-1.800.5-3.800.5-5.600 0-1 .4-1.800 1.200-2.400 3z" fill="#1F2A44"/><path d="M7.600 11h2.400M12 11h2.400" stroke="#8A6A5C" stroke-width=".7"/><circle cx="8.800" cy="11.200" r="1.300" fill="none" stroke="#fff" stroke-width=".5" opacity=".8"/><circle cx="13.200" cy="11.200" r="1.300" fill="none" stroke="#fff" stroke-width=".5" opacity=".8"/></g></svg>
  <span class="t m2" style="left:1130.500px;top:719.0px;font-size:13.500px;color:#292A2E;letter-spacing:-0.387px">Ryan Lee</span>
  <div class="barbg" style="left:1265px;top:715.0px;width:585px"></div>
  <div class="bar" style="left:1265px;top:715.0px;width:257.4px"></div>
  <span class="barnum" style="left:1276.500px;top:715.6px;letter-spacing:0.590px">44%</span>
  <svg style="left:1102px;top:752px" width="22" height="22" viewBox="0 0 22 22"><circle cx="11" cy="11" r="11" fill="#DFE0E3"/><g fill="none" stroke="#505258" stroke-width="1.400" stroke-linecap="round"><circle cx="11" cy="8" r="2.500"/><path d="M6.600 16.400v-.8a3 3 0 0 1 3-3h2.800a3 3 0 0 1 3 3v.8"/></g></svg>
  <span class="t m2" style="left:1130.500px;top:756.4px;font-size:13.500px;color:#292A2E;letter-spacing:-0.070px">Unassigned</span>
  <div class="barbg" style="left:1265px;top:752.4px;width:585px"></div>
  <div class="bar" style="left:1265px;top:752.4px;width:257.4px"></div>
  <span class="barnum" style="left:1276.500px;top:753.0px;letter-spacing:0.590px">44%</span>
  <svg style="left:1102px;top:790px" width="22" height="22" viewBox="0 0 22 22"><circle cx="11" cy="11" r="11" fill="#FB9700"/><text x="11" y="14" text-anchor="middle" font-family="Liberation Sans, Arial, sans-serif" font-size="8" font-weight="700" fill="#292A2E">P</text></svg>
  <span class="t m2" style="left:1130.500px;top:793.8px;font-size:13.500px;color:#292A2E;letter-spacing:0.314px">provision-fy25-2-b...</span>
  <div class="barbg" style="left:1265px;top:789.8px;width:585px"></div>
  <div class="bar" style="left:1265px;top:789.8px;width:41.0px"></div>
  <span class="barnum" style="left:1276.500px;top:790.4px;letter-spacing:0.052px">7%</span>
  <svg style="left:1102px;top:827px" width="22" height="22" viewBox="0 0 22 22"><defs><clipPath id="cA"><circle cx="11" cy="11" r="11"/></clipPath></defs><circle cx="11" cy="11" r="11" fill="#F2583A"/><g clip-path="url(#cA)"><path d="M6.600 9.500c0-2 1.700-3.300 4.400-3.300s4.400 1.300 4.400 3.300v4.500c0 2.600-1.300 4.200-2.500 5v3.500H9.100v-3.500c-1.200-.8-2.500-2.400-2.500-5z" fill="#7B5347"/><path d="M6 10c-.8-4.200 1.400-6.400 5-6.400s5.800 2.200 5 6.400c-.5-1.600-1.300-2.400-2.300-2.800-1.800.4-3.600.4-5.400 0-1 .4-1.800 1.200-2.300 2.800z" fill="#1B2238"/><path d="M9.300 16.800c1.100.6 2.300.6 3.400 0" stroke="#4E342E" stroke-width=".7" fill="none"/></g></svg>
  <span class="t m2" style="left:1130.500px;top:831.2px;font-size:13.500px;color:#292A2E;letter-spacing:0.033px">Admin Istrator</span>
  <div class="barbg" style="left:1265px;top:827.2px;width:585px"></div>
  <div class="bar" style="left:1265px;top:827.2px;width:22.8px"></div>
</div>

<!-- ================= DROPDOWN ================= -->
<div id="dropdown">
  <div class="abs" style="left:1382px;top:65px;width:471px;height:561px;background:#fff;border-radius:4px;box-shadow:0 8px 12px rgba(30,31,33,.15),0 0 1px rgba(30,31,33,.31)"></div>
  <span class="t b" style="left:1396.500px;top:75.2px;font-size:11.500px;color:#292A2E;letter-spacing:-0.024px">Personal Jira settings</span>
  <svg class="ic" style="left:1400.400px;top:107.300px;color:#292A2E;stroke-width:1.550" width="15" height="15" viewBox="0 0 16 16"><circle cx="8" cy="4.800" r="3.200"/><path d="M2.400 14.900v-.7a3.500 3.500 0 0 1 3.500-3.500h4.200a3.500 3.500 0 0 1 3.500 3.500v.7"/></svg>
  <span class="t m3" style="left:1430px;top:100.9px;font-size:13.500px;color:#292A2E;letter-spacing:0.030px">General settings</span>
  <span class="t" style="left:1430px;top:116.0px;font-size:11.200px;color:#5C5F66;letter-spacing:0.316px">Manage language, time zone, and other personal preferences</span>
  <svg class="ic" style="left:1400.100px;top:156.400px;color:#292A2E;stroke-width:1.550" width="15" height="15" viewBox="0 0 16 16"><path d="M8 1.600a3.900 3.900 0 0 0-3.900 3.900v3l-2.200 3.900h12.200l-2.200-3.900v-3A3.900 3.900 0 0 0 8 1.600z"/><path d="M6.100 14.100a2 2 0 0 0 3.800 0"/></svg>
  <span class="t m3" style="left:1430px;top:149.6px;font-size:13.500px;color:#292A2E;letter-spacing:0.221px">Notification settings</span>
  <span class="t" style="left:1430px;top:164.7px;font-size:11.200px;color:#5C5F66;letter-spacing:0.402px">Manage email and in-product notifications from Jira</span>
  <span class="t b" style="left:1396.500px;top:193.4px;font-size:11.500px;color:#292A2E;letter-spacing:0.020px">Jira admin settings</span>
  <svg class="ic" style="left:1399.500px;top:225.6px;color:#292A2E;stroke-width:1.500" width="15" height="15" viewBox="0 0 16 16"><rect x="1.800" y="2.200" width="12.400" height="8.800" rx="1.600"/><path d="M8 11.200v2.600M5 14h6"/></svg>
  <span class="t m3" style="left:1430px;top:219.2px;font-size:13.500px;color:#292A2E;letter-spacing:-0.019px">System</span>
  <span class="t" style="left:1430px;top:234.3px;font-size:11.200px;color:#5C5F66;letter-spacing:0.364px">Manage general configuration, security, automation, user interface, and more</span>
  <svg class="ic" style="left:1399.500px;top:274.6px;color:#292A2E;stroke-width:1.500" width="15" height="15" viewBox="0 0 16 16"><rect x="1.600" y="1.400" width="5.200" height="5.200" rx="2.300"/><rect x="9.200" y="1.400" width="5.200" height="5.200" rx="2.300"/><rect x="1.600" y="9.200" width="5.200" height="5.200" rx="2.300"/><rect x="9.200" y="9.200" width="5.200" height="5.200" rx="2.300"/></svg>
  <span class="t m3" style="left:1430px;top:267.8px;font-size:13.500px;color:#292A2E;letter-spacing:0.152px">Products</span>
  <span class="t" style="left:1430px;top:282.9px;font-size:11.200px;color:#5C5F66;letter-spacing:0.383px">Manage Jira products' access, settings, and integrations</span>
  <svg class="ic" style="left:1399.800px;top:323.3px;color:#292A2E;stroke-width:1.500" width="15" height="15" viewBox="0 0 16 16"><path d="M7.300 4.200L1.400 5l2.100 2.300-2 2 3.400-.4 2.100 2.100-.600 3.500 1.500-1.500 2.500 2.100 1.700-2.300.3-2.900 1.200-1.900Q15.200 4.600 14.600 1.600 11.600.900 8.900 2.500z"/><path d="M1.700 13.900L5.400 10.400"/><circle cx="11" cy="4.800" r=".7" fill="currentColor" stroke-width=".6"/></svg>
  <span class="t m3" style="left:1430px;top:316.4px;font-size:13.500px;color:#292A2E;letter-spacing:0.015px">Projects</span>
  <span class="t" style="left:1430px;top:331.5px;font-size:11.200px;color:#5C5F66;letter-spacing:0.362px">Manage project settings, categories, and more</span>
  <div class="abs" style="left:1385px;top:358px;width:463px;height:44px;border:2px solid #CB2467;border-radius:6px"></div>
  <svg class="ic" style="left:1398.700px;top:371.800px;color:#292A2E;stroke-width:1.450" width="16.500" height="16.500" viewBox="0 0 16 16"><rect x="1.600" y="2.400" width="10.400" height="8.400" rx="1.600"/><path d="M4.400 6.600l1.700 1.700L9.200 5M14.400 5.600v5.800a2.200 2.200 0 0 1-2.200 2.200H5"/></svg>
  <span class="t m3" style="left:1430px;top:365.0px;font-size:13.500px;color:#292A2E;letter-spacing:-0.007px">Work items</span>
  <span class="t" style="left:1430px;top:380.1px;font-size:11.200px;color:#5C5F66;letter-spacing:0.355px">Configure work types, workflows, screens, fields, and more</span>
  <svg class="ic" style="left:1399.500px;top:421.200px;color:#292A2E;stroke-width:1.500" width="15" height="15" viewBox="0 0 16 16"><rect x="1.800" y="1.800" width="4.400" height="4.400" rx="1.500"/><rect x="9.600" y="1.800" width="4.400" height="4.400" rx="1.500"/><rect x="1.800" y="9.600" width="4.400" height="4.400" rx="1.500"/><path d="M11.800 9.200v5.200M9.200 11.800h5.200"/></svg>
  <span class="t m3" style="left:1430px;top:414.5px;font-size:13.500px;color:#292A2E;letter-spacing:-0.045px">Apps</span>
  <span class="t" style="left:1430px;top:429.2px;font-size:11.200px;color:#5C5F66;letter-spacing:0.326px">Add and manage Jira Marketplace apps and integrations</span>
  <span class="t" style="left:1396.500px;top:467px;font-size:11.100px;color:#505258">Tip: Try</span>
  <div class="abs" style="left:1436px;top:468px;width:13px;height:14px;border-radius:3px;background:#F0F4FB"></div>
  <span class="t" style="left:1437.500px;top:467px;font-size:10px;color:#505258">⌘</span>
  <div class="abs" style="left:1452px;top:468px;width:12px;height:14px;border-radius:3px;background:#F0F4FB"></div>
  <span class="t" style="left:1454.500px;top:467px;font-size:10.500px;color:#505258">K</span>
  <span class="t" style="left:1467.500px;top:467px;font-size:11.100px;color:#505258">to search Jira settings</span>
  <span class="t b" style="left:1396.500px;top:502.5px;font-size:11.500px;color:#292A2E;letter-spacing:-0.029px">Atlassian admin settings</span>
  <svg class="ic" style="left:1399px;top:536px;color:#292A2E;stroke-width:1.500" width="17" height="14" viewBox="0 0 17 14"><circle cx="4.900" cy="2.700" r="2.200"/><circle cx="12.700" cy="2.700" r="2.200"/><path d="M3.200 12.300C1.200 12.300 1.200 7.500 4.900 7.500 8.500 7.500 9.200 12.300 12.800 12.300 16.500 12.300 16.500 7.500 12.800 7.500 11 7.500 9.900 8.600 9.200 9.400"/></svg>
  <span class="t m3" style="left:1430px;top:528.0px;font-size:13.500px;color:#292A2E;letter-spacing:-0.037px">User management</span>
  <span class="t" style="left:1430px;top:543.1px;font-size:11.200px;color:#5C5F66;letter-spacing:0.306px">Manage users, groups, and access requests</span>
  <svg class="ic" style="left:1819.300px;top:534.8px;stroke-width:1.500;color:#292A2E" width="16" height="16" viewBox="0 0 16 16"><path d="M5.600 2.600H3.600a1.400 1.400 0 0 0-1.400 1.400v8.400a1.400 1.400 0 0 0 1.400 1.400H12a1.400 1.400 0 0 0 1.400-1.400V10M10 2h4v4M13.800 2.200L8.400 7.600"/></svg>
  <svg class="ic" style="left:1399px;top:583px;color:#292A2E;stroke-width:1.500" width="17" height="14" viewBox="0 0 17 14"><rect x="1.600" y="2.900" width="14.100" height="10.200" rx="1.900"/><path d="M1.600 5.900h14.100M10.400 10.100h2.600"/></svg>
  <span class="t m3" style="left:1430px;top:576.5px;font-size:13.500px;color:#292A2E;letter-spacing:-0.019px">Billing</span>
  <span class="t" style="left:1430px;top:591.6px;font-size:11.200px;color:#5C5F66;letter-spacing:0.347px">Update your billing details, manage subscriptions, and more</span>
  <svg class="ic" style="left:1819.300px;top:583.8px;stroke-width:1.500;color:#292A2E" width="16" height="16" viewBox="0 0 16 16"><path d="M5.600 2.600H3.600a1.400 1.400 0 0 0-1.400 1.400v8.400a1.400 1.400 0 0 0 1.400 1.400H12a1.400 1.400 0 0 0 1.400-1.400V10M10 2h4v4M13.800 2.200L8.400 7.600"/></svg>
</div>

</div></div>
</body>
</html>
